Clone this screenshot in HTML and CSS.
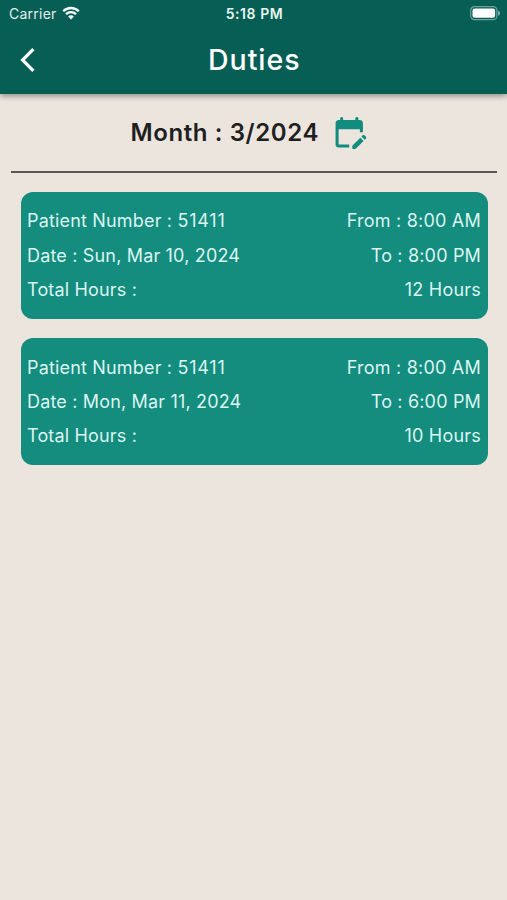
FILE: index.html
```html
<!DOCTYPE html>
<html lang="en">
<head>
<meta charset="utf-8">
<title>Duties</title>
<link rel="stylesheet" href="styles.css">
</head>
<body>
<header class="header">
  <div class="status">
    <div class="status-left">
      <span class="carrier">Carrier</span>
      <svg class="wifi" viewBox="0 0 18 14" aria-hidden="true">
        <path d="M1.2 5.2C5.6 .9 12.4 .9 16.8 5.2M4 8.1C6.8 5.4 11.2 5.4 14 8.1" fill="none" stroke="#fff" stroke-width="2.3"/>
        <path d="M6.1 10.5C7.8 8.9 10.2 8.9 11.9 10.5L9 13.4Z" fill="#fff"/>
      </svg>
    </div>
    <span class="clock">5:18 PM</span>
    <svg class="battery" viewBox="0 0 31 15" aria-hidden="true">
      <rect x=".7" y=".7" width="26.2" height="12.9" rx="3.6" fill="none" stroke="#fff" stroke-opacity=".42" stroke-width="1.2"/>
      <rect x="2.5" y="2.5" width="22.6" height="9.3" rx="2" fill="#fff"/>
      <path d="M28 4.8C30.8 5.6 30.8 8.8 28 9.6Z" fill="#fff" fill-opacity=".5"/>
    </svg>
  </div>
  <div class="nav">
    <svg class="back" viewBox="0 0 18 26" aria-hidden="true">
      <path d="M14.4 2.2L3.6 13L14.4 23.8" fill="none" stroke="#fff" stroke-width="3.2"/>
    </svg>
    <h1 class="title">Duties</h1>
  </div>
</header>
<main class="content">
  <div class="month-row">
    <span class="month">Month : 3/2024</span>
    <svg class="calendar" viewBox="0 0 24 24" aria-hidden="true">
      <path d="M12 22H5c-1.11 0-2-.9-2-2L3.01 6c0-1.1.88-2 1.99-2h1V3c0-.55.45-1 1-1s1 .45 1 1v1h8V3c0-.55.45-1 1-1s1 .45 1 1v1h1c1.1 0 2 .9 2 2v6h-2v-2H5v10h7v2zM22.13 16.99l.71-.71c.39-.39.39-1.02 0-1.41l-.71-.71c-.39-.39-1.02-.39-1.41 0l-.71.71 2.12 2.12zM21.42 17.7l-5.01 5.01c-.18.18-.44.29-.7.29H14.5c-.28 0-.5-.22-.5-.5v-1.21c0-.27.11-.52.29-.71l5.01-5 2.12 2.12z"/>
    </svg>
  </div>
  <section class="list">
    <article class="card">
      <div class="row"><span>Patient Number : <span class="number">51411</span></span><span class="from">From : 8:00 AM</span></div>
      <div class="row"><span>Date : Sun, Mar 10, 2024</span><span>To : 8:00 PM</span></div>
      <div class="row"><span>Total Hours :</span><span class="hours">12 Hours</span></div>
    </article>
    <article class="card">
      <div class="row"><span>Patient Number : <span class="number">51411</span></span><span class="from">From : 8:00 AM</span></div>
      <div class="row"><span>Date : Mon, Mar 11, 2024</span><span>To : 6:00 PM</span></div>
      <div class="row"><span>Total Hours :</span><span class="hours">10 Hours</span></div>
    </article>
  </section>
</main>
</body>
</html>
```
FILE: styles.css
```css
* { box-sizing: border-box; }
body {
  margin: 0;
  min-height: 900px;
  background: #ebe5de;
  font-family: Inter, "Liberation Sans", sans-serif;
  color: #1f1f1f;
}
.header {
  height: 94px;
  background: #075e54;
  color: #fff;
  box-shadow: 0 2px 6px rgba(0, 0, 0, .4);
}
.status {
  display: grid;
  grid-template-columns: 1fr auto 1fr;
  align-items: center;
  height: 26px;
  padding: 0 7px 0 9px;
}
.status-left { display: flex; align-items: center; gap: 5px; }
.carrier { font-size: 14px; color: #e2f0ed; letter-spacing: .25px; }
.wifi { width: 18px; height: 14px; }
.clock { font-size: 14px; font-weight: 600; color: #e8f5f2; letter-spacing: .55px; }
.battery { width: 31px; height: 15px; justify-self: end; margin-right: -1px; }
.nav {
  display: grid;
  grid-template-columns: 60px 1fr 60px;
  align-items: center;
  height: 67px;
}
.back { width: 18px; height: 26px; margin-left: 19px; }
.title {
  margin: 0;
  padding-left: 1.5px;
  font-size: 28.5px;
  font-weight: 500;
  line-height: 36px;
  letter-spacing: .95px;
  text-align: center;
}
.content { padding: 0 10px 0 11px; }
.month-row {
  display: flex;
  justify-content: center;
  align-items: center;
  gap: 12px;
  height: 79px;
  padding-right: 10px;
  border-bottom: 2px solid #5b5650;
}
.month { font-size: 24px; font-weight: 600; letter-spacing: .6px; }
.calendar { width: 36.5px; height: 36.5px; fill: #128c7e; }
.list { display: grid; gap: 19.5px; padding: 18.5px 9.5px 0; }
.card {
  height: 127px;
  padding: 12.8px 6.5px 0;
  border-radius: 12px;
  background: #148c7e;
  color: #dcf5f1;
  font-size: 18px;
}
.row {
  display: flex;
  justify-content: space-between;
  line-height: 34.2px;
  letter-spacing: .17px;
}
.number { letter-spacing: .8px; }
.from, .hours { letter-spacing: .22px; }
```
